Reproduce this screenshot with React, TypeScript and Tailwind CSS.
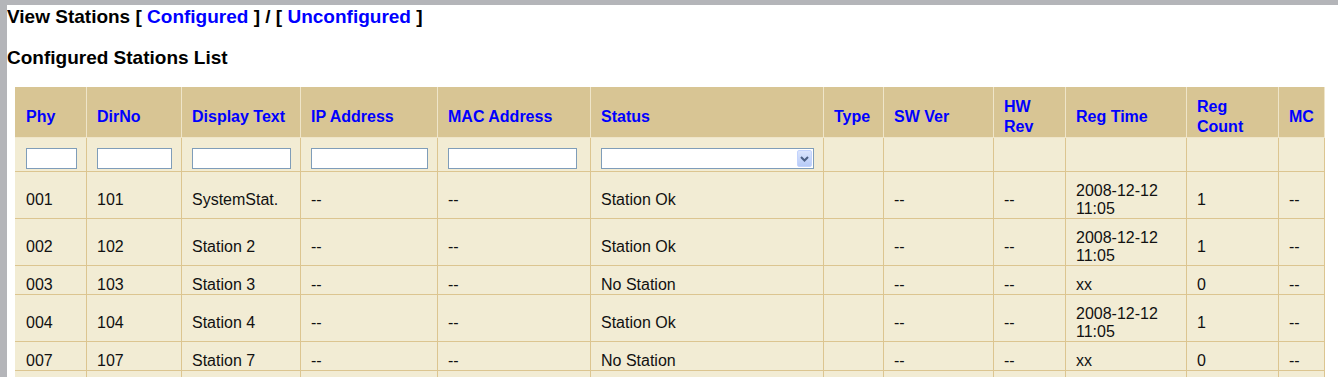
import React from 'react';

type Col = { label: React.ReactNode; w: number; filter?: 'input' | 'select'; fw?: number };

const cols: Col[] = [
  { label: 'Phy', w: 72, filter: 'input', fw: 51 },
  { label: 'DirNo', w: 95, filter: 'input', fw: 75 },
  { label: 'Display Text', w: 119, filter: 'input', fw: 99 },
  { label: 'IP Address', w: 137, filter: 'input', fw: 117 },
  { label: 'MAC Address', w: 153, filter: 'input', fw: 129 },
  { label: 'Status', w: 233, filter: 'select', fw: 213 },
  { label: 'Type', w: 60 },
  { label: 'SW Ver', w: 110 },
  { label: <>HW<br />Rev</>, w: 72 },
  { label: 'Reg Time', w: 121 },
  { label: <>Reg<br />Count</>, w: 92 },
  { label: 'MC', w: 46 },
];

const rows: string[][] = [
  ['001', '101', 'SystemStat.', '--', '--', 'Station Ok', '', '--', '--', '2008-12-12 11:05', '1', '--'],
  ['002', '102', 'Station 2', '--', '--', 'Station Ok', '', '--', '--', '2008-12-12 11:05', '1', '--'],
  ['003', '103', 'Station 3', '--', '--', 'No Station', '', '--', '--', 'xx', '0', '--'],
  ['004', '104', 'Station 4', '--', '--', 'Station Ok', '', '--', '--', '2008-12-12 11:05', '1', '--'],
  ['007', '107', 'Station 7', '--', '--', 'No Station', '', '--', '--', 'xx', '0', '--'],
];

const App: React.FC = () => {
  return (
    <div className="h-[377px] overflow-hidden bg-white border-t-[5px] border-l-[7px] border-[#b4b5b9] font-['Liberation_Sans',Arial,sans-serif] text-black">
      <div className="pt-[1px]">
        <h1 className="text-[19px] leading-[22px] font-bold">
          View Stations [ <a className="text-[#0000ff]">Configured</a> ] / [{' '}
          <a className="text-[#0000ff]">Unconfigured</a> ]
        </h1>
        <h2 className="mt-[19px] text-[19px] leading-[22px] font-bold">Configured Stations List</h2>
      </div>

      <table className="ml-[8px] mt-[18px] w-[1310px] table-fixed border-separate border-spacing-0">
        <colgroup>
          {cols.map((c, i) => (
            <col key={i} style={{ width: c.w }} />
          ))}
        </colgroup>
        <thead>
          <tr>
            {cols.map((c, i) => (
              <th
                key={i}
                className={`${i === 0 ? 'pl-[11px]' : 'pl-[10px]'} pr-1 pt-[10px] pb-0 border-r border-b border-[#efe5c9] bg-[#d8c594] text-left align-middle text-[16px] leading-[20px] font-bold text-[#0000ff]`}
              >
                {c.label}
              </th>
            ))}
          </tr>
          <tr>
            {cols.map((c, i) => (
              <td
                key={i}
                className={`${i === 0 ? 'pl-[11px]' : 'pl-[10px]'} pt-[10px] pb-[2px] border-r border-b border-[#dcc590] bg-[#f2ecd4] leading-none`}
              >
                {c.filter === 'input' && (
                  <input
                    type="text"
                    style={{ width: c.fw }}
                    className="block h-[21px] border border-[#7f9db9] bg-white outline-none"
                  />
                )}
                {c.filter === 'select' && (
                  <div
                    style={{ width: c.fw }}
                    className="flex h-[21px] items-center justify-end border border-[#7f9db9] bg-white pr-[1px]"
                  >
                    <span className="flex h-[17px] w-[15px] items-center justify-center rounded-[2px] border border-[#c3d3fd] bg-gradient-to-b from-[#dbe5fd] to-[#b7cbf7]">
                      <svg width="9" height="6" viewBox="0 0 9 6">
                        <path d="M1 1 L4.5 4.5 L8 1" fill="none" stroke="#4d6185" strokeWidth="2" />
                      </svg>
                    </span>
                  </div>
                )}
              </td>
            ))}
          </tr>
        </thead>
        <tbody>
          {rows.map((r, ri) => (
            <tr key={ri}>
              {r.map((v, ci) => (
                <td
                  key={ci}
                  className={`${ci === 0 ? 'pl-[11px]' : 'pl-[10px]'} pr-1 pt-[10px] pb-0 border-r border-b border-[#dcc590] bg-[#f2ecd4] align-middle text-[16px] leading-[18px] text-[#111]`}
                >
                  {v}
                </td>
              ))}
            </tr>
          ))}
          {/* next row is cut off by the window edge */}
          <tr>
            {cols.map((_, ci) => (
              <td key={ci} className="h-[29px] border-r border-b border-[#dcc590] bg-[#f2ecd4]" />
            ))}
          </tr>
        </tbody>
      </table>
    </div>
  );
};

export default App;
